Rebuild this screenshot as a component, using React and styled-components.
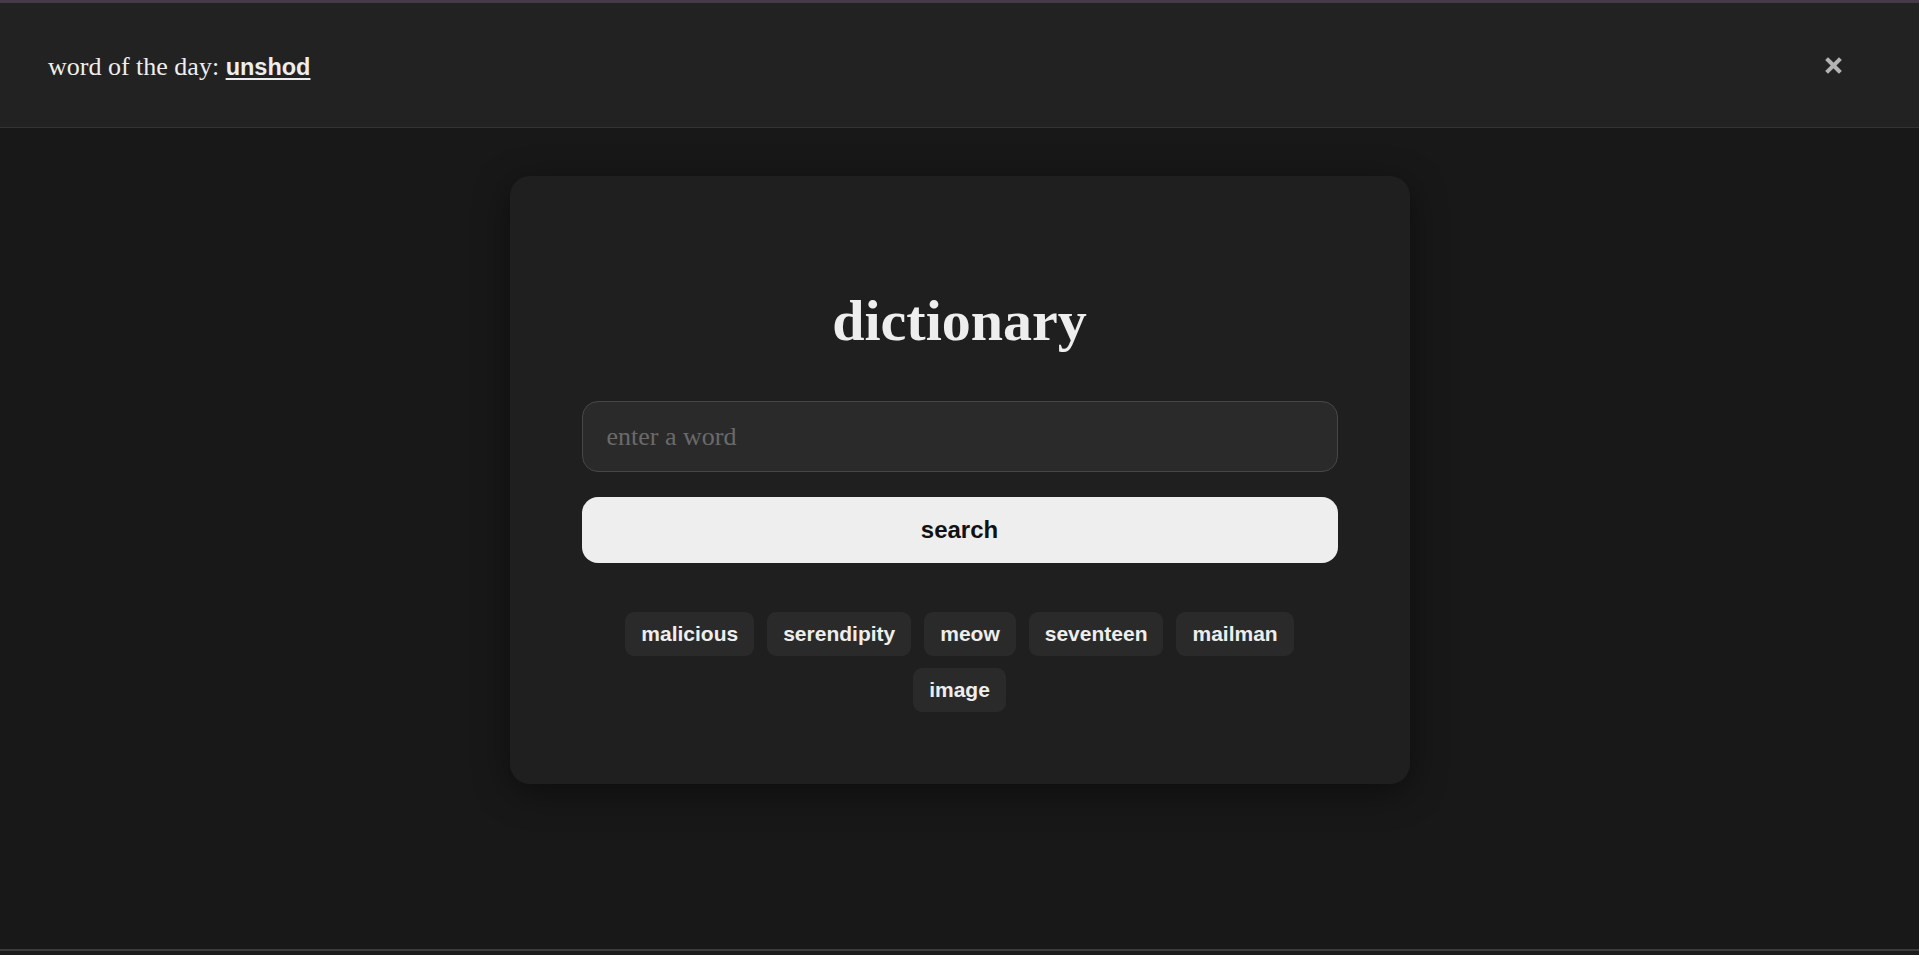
import React from 'react'
import styled, { createGlobalStyle } from 'styled-components'

const GlobalStyle = createGlobalStyle`
  html, body {
    margin: 0;
    padding: 0;
    background: #181818;
  }
  * {
    box-sizing: border-box;
  }
`

const Page = styled.div`
  min-height: 100vh;
  display: flex;
  flex-direction: column;
  background: #181818;
  border-top: 3px solid #463a48;
`

const Banner = styled.header`
  height: 125px;
  display: flex;
  align-items: center;
  justify-content: space-between;
  padding: 0 77px 0 48px;
  background: #222222;
  border-bottom: 1px solid #333333;
`

const BannerText = styled.p`
  margin: 0;
  padding-top: 4px;
  color: #eeeeee;
  font-family: "Liberation Serif", serif;
  font-size: 26px;
`

const WordLink = styled.a`
  color: #eeeeee;
  font-family: "Liberation Sans", Arial, sans-serif;
  font-weight: 700;
  font-size: 23.5px;
  text-decoration: underline;
  text-underline-offset: 3px;
  text-decoration-thickness: 2px;
`

const CloseButton = styled.button`
  width: 17px;
  height: 17px;
  padding: 0;
  border: none;
  background: none;
  display: flex;
  cursor: pointer;
`

const Main = styled.main`
  flex: 1;
  padding-top: 48px;
`

const Card = styled.section`
  width: 900px;
  margin: 0 auto;
  padding: 110px 72px 72px;
  background: #1f1f1f;
  border-radius: 20px;
  box-shadow: 0 8px 36px rgba(0, 0, 0, 0.45);
  display: flex;
  flex-direction: column;
`

const Title = styled.h1`
  margin: 0 0 45px;
  text-align: center;
  color: #eeeeee;
  font-family: "Liberation Serif", serif;
  font-weight: 700;
  font-size: 58px;
  line-height: 70px;
`

const SearchInput = styled.input`
  height: 71px;
  width: 100%;
  padding: 0 24px;
  background: #2a2a2a;
  border: 1px solid #474747;
  border-radius: 16px;
  color: #eeeeee;
  font-family: "Liberation Serif", serif;
  font-size: 26px;
  outline: none;

  &::placeholder {
    color: #6a6a6a;
  }
`

const SearchButton = styled.button`
  margin-top: 25px;
  height: 66px;
  width: 100%;
  border: none;
  border-radius: 16px;
  background: #eeeeee;
  color: #111111;
  font-family: "Liberation Sans", Arial, sans-serif;
  font-weight: 700;
  font-size: 24px;
  cursor: pointer;
`

const Suggestions = styled.div`
  margin-top: 49px;
  display: flex;
  flex-wrap: wrap;
  justify-content: center;
  gap: 12px 13px;
`

const Tag = styled.button`
  height: 44px;
  padding: 0 16px;
  border: none;
  border-radius: 9px;
  background: #2a2a2a;
  color: #eeeeee;
  font-family: "Liberation Sans", Arial, sans-serif;
  font-weight: 700;
  font-size: 21px;
  cursor: pointer;
`

const Footer = styled.footer`
  height: 6px;
  background: #1c1c1c;
  border-top: 2px solid #3c3c3c;
`

const CloseIcon = () => (
  <svg width="17" height="17" viewBox="0 0 17 17">
    <path
      d="M3 3 L14 14 M14 3 L3 14"
      stroke="#b3b3b3"
      strokeWidth="4"
      strokeLinecap="square"
    />
  </svg>
)

const words = ['malicious', 'serendipity', 'meow', 'seventeen', 'mailman', 'image']

export default function App() {
  return (
    <>
      <GlobalStyle />
      <Page>
        <Banner>
          <BannerText>
            word of the day: <WordLink href="#">unshod</WordLink>
          </BannerText>
          <CloseButton aria-label="close">
            <CloseIcon />
          </CloseButton>
        </Banner>
        <Main>
          <Card>
            <Title>dictionary</Title>
            <SearchInput placeholder="enter a word" />
            <SearchButton>search</SearchButton>
            <Suggestions>
              {words.map(w => (
                <Tag key={w}>{w}</Tag>
              ))}
            </Suggestions>
          </Card>
        </Main>
        <Footer />
      </Page>
    </>
  )
}
